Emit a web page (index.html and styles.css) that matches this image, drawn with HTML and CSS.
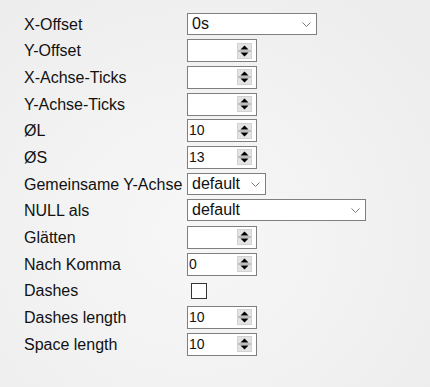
FILE: index.html
```html
<!DOCTYPE html>
<html lang="de">
<head>
    <meta charset="UTF-8">
    <title>Chart Optionen</title>
    <link rel="stylesheet" href="styles.css">
</head>
<body>

    <div class="settings">
        <div class="label">X-Offset</div>
        <div class="select select-wide">
            <span class="value">0s</span>
            <svg class="chevron" width="9" height="5" viewBox="0 0 9 5"><polyline points="0.5,0.5 4.5,4.5 8.5,0.5" fill="none" stroke="#7a7a7a" stroke-width="1"/></svg>
        </div>

        <div class="label">Y-Offset</div>
        <div class="number"><span class="value"></span><svg class="spin" width="15" height="16" viewBox="0 0 15 16"><rect x="0.5" y="0.5" width="14" height="15" fill="#e3e3e3" stroke="#d2d2d2"/><polygon points="3.5,6.5 7.5,2.5 11.5,6.5" fill="#000"/><line x1="1" y1="8" x2="14" y2="8" stroke="#9a9a9a"/><polygon points="3.5,9.5 7.5,13.5 11.5,9.5" fill="#000"/></svg></div>

        <div class="label">X-Achse-Ticks</div>
        <div class="number"><span class="value"></span><svg class="spin" width="15" height="16" viewBox="0 0 15 16"><rect x="0.5" y="0.5" width="14" height="15" fill="#e3e3e3" stroke="#d2d2d2"/><polygon points="3.5,6.5 7.5,2.5 11.5,6.5" fill="#000"/><line x1="1" y1="8" x2="14" y2="8" stroke="#9a9a9a"/><polygon points="3.5,9.5 7.5,13.5 11.5,9.5" fill="#000"/></svg></div>

        <div class="label">Y-Achse-Ticks</div>
        <div class="number"><span class="value"></span><svg class="spin" width="15" height="16" viewBox="0 0 15 16"><rect x="0.5" y="0.5" width="14" height="15" fill="#e3e3e3" stroke="#d2d2d2"/><polygon points="3.5,6.5 7.5,2.5 11.5,6.5" fill="#000"/><line x1="1" y1="8" x2="14" y2="8" stroke="#9a9a9a"/><polygon points="3.5,9.5 7.5,13.5 11.5,9.5" fill="#000"/></svg></div>

        <div class="label">ØL</div>
        <div class="number"><span class="value">10</span><svg class="spin" width="15" height="16" viewBox="0 0 15 16"><rect x="0.5" y="0.5" width="14" height="15" fill="#e3e3e3" stroke="#d2d2d2"/><polygon points="3.5,6.5 7.5,2.5 11.5,6.5" fill="#000"/><line x1="1" y1="8" x2="14" y2="8" stroke="#9a9a9a"/><polygon points="3.5,9.5 7.5,13.5 11.5,9.5" fill="#000"/></svg></div>

        <div class="label">ØS</div>
        <div class="number"><span class="value">13</span><svg class="spin" width="15" height="16" viewBox="0 0 15 16"><rect x="0.5" y="0.5" width="14" height="15" fill="#e3e3e3" stroke="#d2d2d2"/><polygon points="3.5,6.5 7.5,2.5 11.5,6.5" fill="#000"/><line x1="1" y1="8" x2="14" y2="8" stroke="#9a9a9a"/><polygon points="3.5,9.5 7.5,13.5 11.5,9.5" fill="#000"/></svg></div>

        <div class="label">Gemeinsame Y-Achse</div>
        <div class="select select-small">
            <span class="value">default</span>
            <svg class="chevron" width="9" height="5" viewBox="0 0 9 5"><polyline points="0.5,0.5 4.5,4.5 8.5,0.5" fill="none" stroke="#7a7a7a" stroke-width="1"/></svg>
        </div>

        <div class="label">NULL als</div>
        <div class="select select-long">
            <span class="value">default</span>
            <svg class="chevron" width="9" height="5" viewBox="0 0 9 5"><polyline points="0.5,0.5 4.5,4.5 8.5,0.5" fill="none" stroke="#7a7a7a" stroke-width="1"/></svg>
        </div>

        <div class="label">Glätten</div>
        <div class="number"><span class="value"></span><svg class="spin" width="15" height="16" viewBox="0 0 15 16"><rect x="0.5" y="0.5" width="14" height="15" fill="#e3e3e3" stroke="#d2d2d2"/><polygon points="3.5,6.5 7.5,2.5 11.5,6.5" fill="#000"/><line x1="1" y1="8" x2="14" y2="8" stroke="#9a9a9a"/><polygon points="3.5,9.5 7.5,13.5 11.5,9.5" fill="#000"/></svg></div>

        <div class="label">Nach Komma</div>
        <div class="number"><span class="value">0</span><svg class="spin" width="15" height="16" viewBox="0 0 15 16"><rect x="0.5" y="0.5" width="14" height="15" fill="#e3e3e3" stroke="#d2d2d2"/><polygon points="3.5,6.5 7.5,2.5 11.5,6.5" fill="#000"/><line x1="1" y1="8" x2="14" y2="8" stroke="#9a9a9a"/><polygon points="3.5,9.5 7.5,13.5 11.5,9.5" fill="#000"/></svg></div>

        <div class="label">Dashes</div>
        <div><span class="checkbox"></span></div>

        <div class="label">Dashes length</div>
        <div class="number"><span class="value">10</span><svg class="spin" width="15" height="16" viewBox="0 0 15 16"><rect x="0.5" y="0.5" width="14" height="15" fill="#e3e3e3" stroke="#d2d2d2"/><polygon points="3.5,6.5 7.5,2.5 11.5,6.5" fill="#000"/><line x1="1" y1="8" x2="14" y2="8" stroke="#9a9a9a"/><polygon points="3.5,9.5 7.5,13.5 11.5,9.5" fill="#000"/></svg></div>

        <div class="label">Space length</div>
        <div class="number"><span class="value">10</span><svg class="spin" width="15" height="16" viewBox="0 0 15 16"><rect x="0.5" y="0.5" width="14" height="15" fill="#e3e3e3" stroke="#d2d2d2"/><polygon points="3.5,6.5 7.5,2.5 11.5,6.5" fill="#000"/><line x1="1" y1="8" x2="14" y2="8" stroke="#9a9a9a"/><polygon points="3.5,9.5 7.5,13.5 11.5,9.5" fill="#000"/></svg></div>
    </div>

</body>
</html>
```

FILE: styles.css
```css
* {
    box-sizing: border-box;
    margin: 0;
    padding: 0;
}

html, body {
    height: 100%;
}

body {
    font-family: 'Liberation Sans', Arial, sans-serif;
    font-size: 16px;
    color: #111;
    background: radial-gradient(ellipse at 45% 60%, #f7f7f7 0%, #f2f2f2 45%, #ececec 100%);
}

/* Two column form: labels left, controls right */
.settings {
    display: grid;
    grid-template-columns: 163px auto;
    grid-auto-rows: 26.67px;
    align-items: start;
    justify-items: start;
    padding: 12.67px 0 0 24px;
}

.label {
    line-height: 22px;
    padding-top: 1px;
    white-space: nowrap;
}

/* Select boxes */
.select {
    height: 22px;
    display: flex;
    align-items: center;
    background-color: #fff;
    border: 1px solid #7f7f7f;
    padding: 0 5px 0 4px;
}

.select .value {
    flex: 1;
    line-height: 20px;
}

.select-wide {
    width: 130px;
}

.select-small {
    width: 79px;
}

.select-long {
    width: 179px;
}

.chevron {
    display: block;
    margin-top: 1px;
}

/* Number inputs with spinner */
.number {
    width: 70px;
    height: 23px;
    display: flex;
    align-items: center;
    background-color: #fff;
    border: 1px solid #7f7f7f;
    padding: 0 4px 0 1px;
    font-size: 14px;
}

.number .value {
    flex: 1;
    line-height: 19px;
}

.spin {
    display: block;
}

/* Checkbox */
.checkbox {
    display: block;
    width: 16px;
    height: 16px;
    margin: 4px 0 0 4px;
    background-color: #fff;
    border: 1px solid #333;
}
```
